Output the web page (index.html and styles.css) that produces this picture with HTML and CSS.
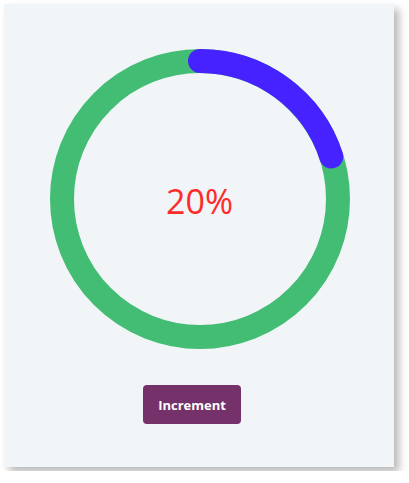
FILE: index.html
```html
<!DOCTYPE html>
<html>
<head>
<meta charset="utf-8">
<link rel="stylesheet" href="styles.css">
</head>
<body>
<div class="card">
  <div class="ring">
    <svg width="300" height="300" viewBox="0 0 300 300">
      <circle cx="150" cy="150" r="138" fill="none" stroke="#44bd74" stroke-width="24"/>
      <circle cx="150" cy="150" r="138" fill="none" stroke="#4522ff" stroke-width="24" stroke-linecap="round" stroke-dasharray="173.4 1000" transform="rotate(-90 150 150)"/>
    </svg>
    <div class="label">20%</div>
  </div>
  <button class="btn">Increment</button>
</div>
</body>
</html>
```
FILE: styles.css
```css
html, body { margin: 0; padding: 0; background: #ffffff; }
.card {
  margin: 4px;
  width: 390px;
  height: 463px;
  box-sizing: border-box;
  background: #f1f5f8;
  box-shadow: 5px 5px 8px rgba(0,0,0,0.28);
  display: flex;
  flex-direction: column;
  align-items: center;
  padding-top: 45px;
  gap: 36px;
}
.ring {
  position: relative;
  width: 300px;
  height: 300px;
  margin-left: 1px;
}
.ring svg { display: block; }
.label {
  position: absolute;
  inset: 0;
  display: flex;
  align-items: center;
  justify-content: center;
  font-family: "Open Sans", sans-serif;
  font-size: 34px;
  color: #ff2b2b;
  padding-top: 4px;
}
.btn {
  width: 98px;
  height: 39px;
  margin-right: 14px;
  border: none;
  border-radius: 4px;
  background: #74316a;
  color: #ffffff;
  font-family: "Open Sans", sans-serif;
  font-weight: 700;
  font-size: 13px;
  padding: 0;
}
```
